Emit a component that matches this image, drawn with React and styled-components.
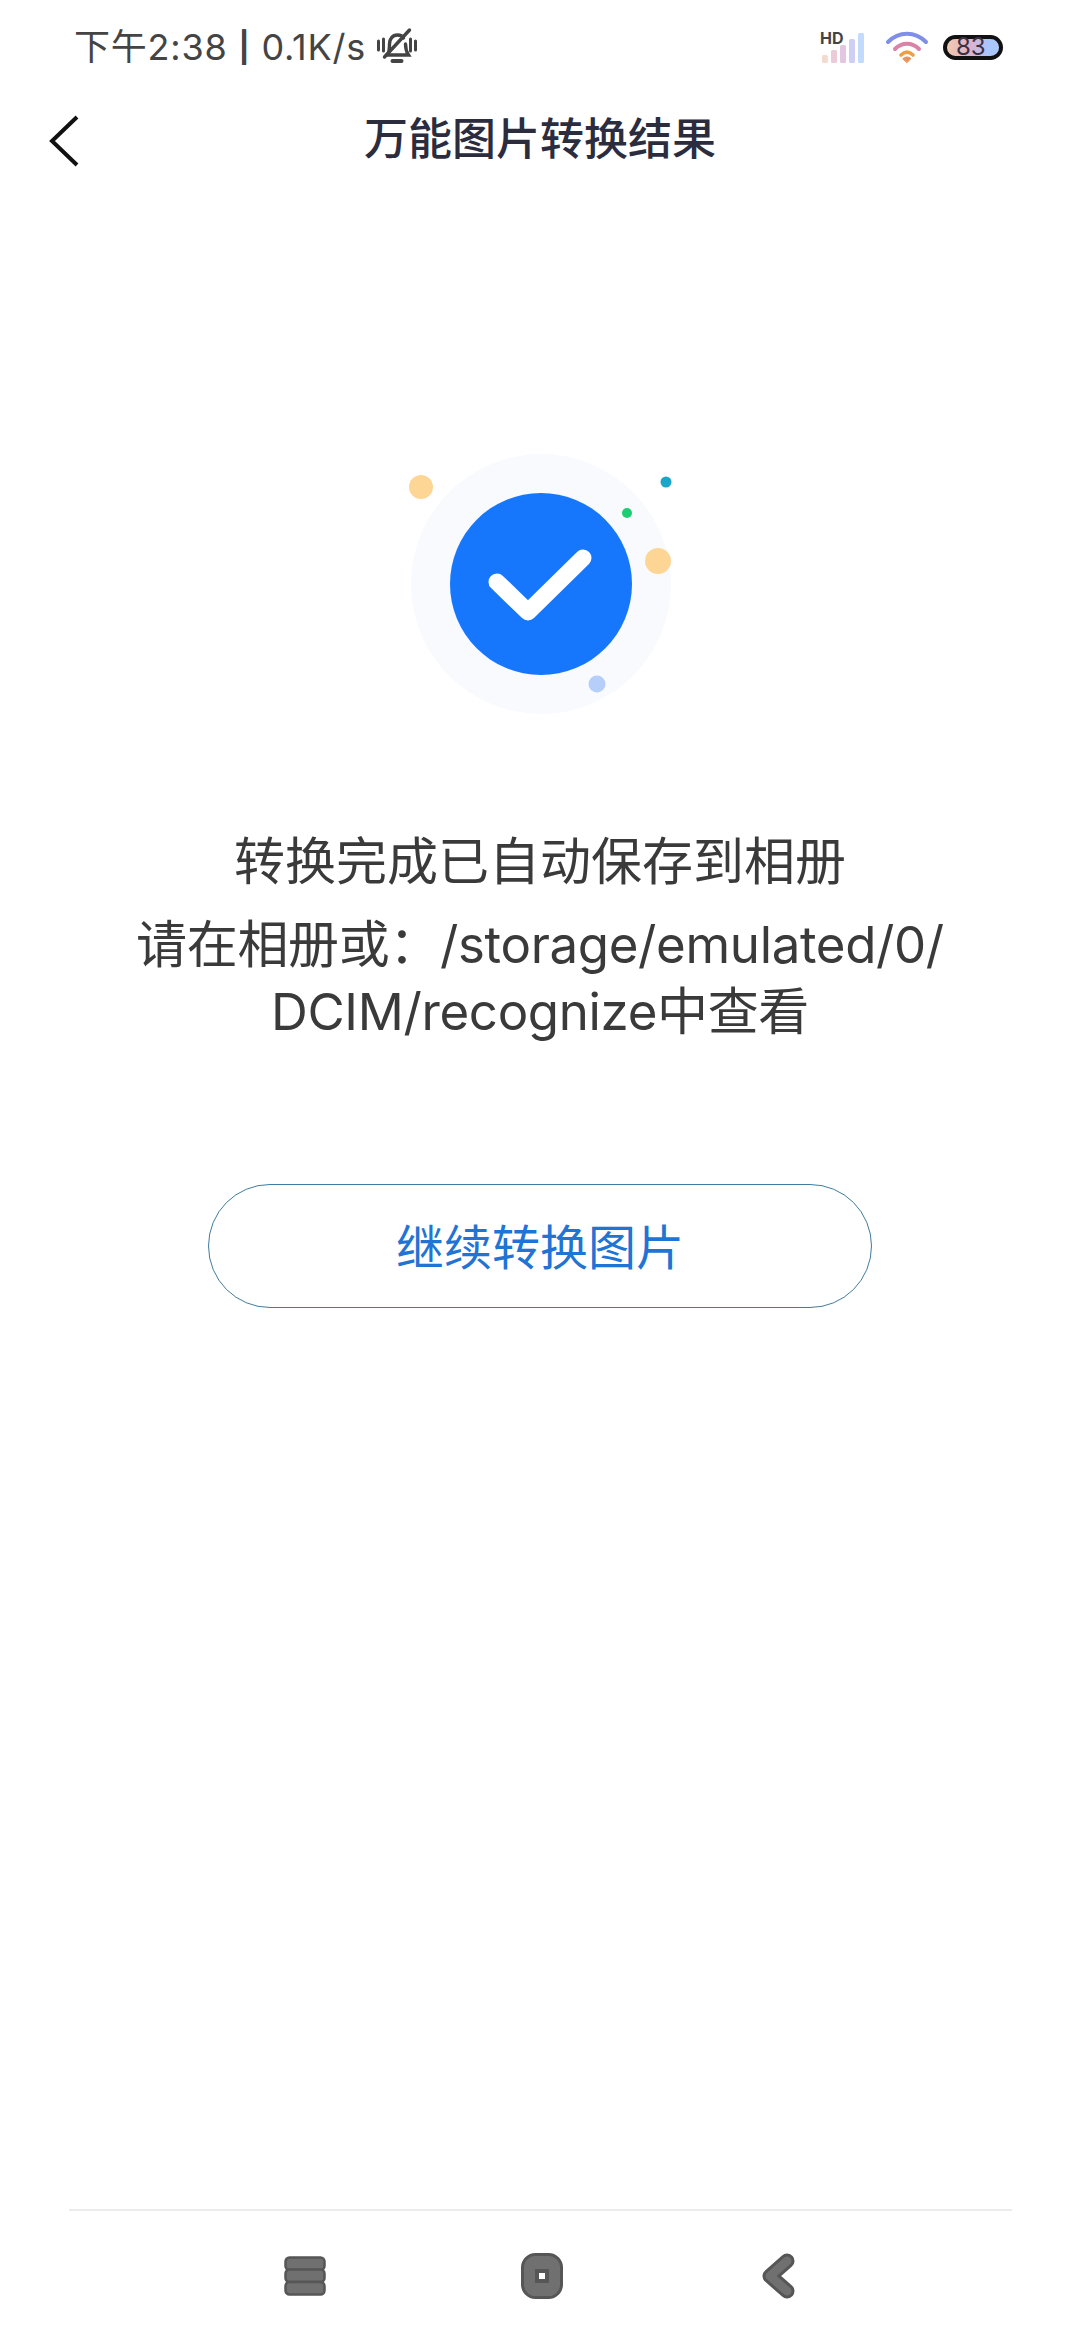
import React from 'react';
import styled, { createGlobalStyle } from 'styled-components';

const GlobalStyle = createGlobalStyle`
    html, body {
        margin: 0;
        padding: 0;
        background: #ffffff;
    }

    body {
        font-family: Inter, "Noto Sans CJK SC", sans-serif;
    }
`;

const Page = styled.div`
    width: 1080px;
    height: 2340px;
    display: flex;
    flex-direction: column;
    background: #ffffff;
    overflow: hidden;
`;

const StatusBar = styled.div`
    height: 94px;
    display: flex;
    align-items: center;
    justify-content: space-between;
    padding: 0 77px 0 74px;
    box-sizing: border-box;
`;

const StatusGroup = styled.div`
    display: flex;
    align-items: center;
    gap: ${(props) => props.$gap}px;
`;

const StatusText = styled.span`
    font-size: 36px;
    line-height: 44px;
    padding-bottom: 1px;
    color: #444444;
    letter-spacing: 0.8px;
    white-space: nowrap;
`;

const StatusPipe = styled.span`
    font-size: 30px;
    font-weight: 700;
    vertical-align: 2px;
`;

const Battery = styled.div`
    width: 60px;
    height: 25px;
    margin-left: -7px;
    box-sizing: border-box;
    border: 4px solid #111111;
    border-radius: 13px;
    background: linear-gradient(90deg, #f2c9ae 0%, #dcb2cf 45%, #a9c6ff 80%, #a9c6ff 100%);
    background-clip: padding-box;
    display: flex;
    align-items: center;
    padding-left: 9px;
    font-size: 24px;
    line-height: 1;
    font-weight: 400;
    color: #3a3040;
`;

const Header = styled.div`
    height: 88px;
    display: grid;
    grid-template-columns: 1fr auto 1fr;
    align-items: center;
    padding-left: 48px;
    padding-right: 48px;
`;

const BackButton = styled.button`
    width: 34px;
    height: 52px;
    margin-top: 6px;
    padding: 0;
    border: none;
    background: transparent;
    display: flex;
`;

const Title = styled.h1`
    margin: 0 0 5px;
    font-size: 44px;
    font-weight: 500;
    line-height: 1;
    color: #2b2d3f;
    font-family: "Noto Sans CJK SC", sans-serif;
`;

const Main = styled.main`
    padding-top: 248px;
    display: flex;
    flex-direction: column;
    align-items: center;
`;

const ResultGraphic = styled.svg`
    display: block;
    width: 320px;
    height: 300px;
`;

const Message = styled.p`
    margin: ${(props) => props.$top}px 0 0;
    font-size: 51px;
    font-weight: 400;
    line-height: 67px;
    letter-spacing: ${(props) => props.$tracking || 0}px;
    text-align: center;
    color: #3a3a3a;
    white-space: nowrap;
`;

const ContinueButton = styled.button`
    margin-top: 139px;
    width: 664px;
    height: 124px;
    padding: 0 0 4px;
    box-sizing: border-box;
    border: 1.5px solid #3f7c9f;
    border-radius: 62px;
    background: #ffffff;
    font-family: "Noto Sans CJK SC", sans-serif;
    font-size: 48px;
    color: #1f74d4;
`;

const BottomNav = styled.nav`
    margin: auto 68px 0 69px;
    height: 131px;
    border-top: 2px solid #ececec;
    box-sizing: border-box;
    display: flex;
    align-items: center;
    justify-content: center;
    gap: 195px;
    padding-left: 3px;
`;

const NavSlot = styled.div`
    width: 42px;
    height: 46px;
    display: flex;
    align-items: center;
    justify-content: center;
`;

function MutedBell() {
    return (
        <svg width="44" height="40" viewBox="0 0 43 40" fill="none" stroke="#444444" strokeWidth="3.4" strokeLinecap="round">
            <path d="M12 28c2-3 2-6 2-11 0-5 3-9 8-9 3 0 5 1 6 3M30 17c0 5 1 8 3 11H11" />
            <path d="M17 34h9" strokeWidth="4" />
            <path d="M9 30 34 3" />
            <path d="M3 14v9M8 12v12M35 12v12M40 14v9" strokeWidth="3" />
        </svg>
    );
}

function SignalIcon() {
    return (
        <svg width="44" height="38" viewBox="0 0 44 38">
            <rect x="2" y="27" width="6" height="8" rx="1.5" fill="#f3dccf" />
            <rect x="11" y="22" width="6" height="13" rx="1.5" fill="#eccbd8" />
            <rect x="20" y="17" width="6" height="18" rx="1.5" fill="#e2c6e2" />
            <rect x="29" y="11" width="6" height="24" rx="1.5" fill="#cfcff5" />
            <rect x="38" y="5" width="6" height="30" rx="1.5" fill="#c2dbfc" />
            <text x="0" y="16" fontFamily="Inter, sans-serif" fontSize="16" fontWeight="700" fill="#444444">HD</text>
        </svg>
    );
}

function WifiIcon() {
    return (
        <svg width="44" height="34" viewBox="0 0 44 32" fill="none" strokeLinecap="round" strokeWidth="4">
            <path d="M3 11C14 0 30 0 41 11" stroke="#7f8fe8" />
            <path d="M10 18c7-7 17-7 24 0" stroke="#d983a8" />
            <path d="M16 24c4-4 8-4 12 0" stroke="#ee9f45" strokeWidth="3.6" />
            <path d="M18 27.5c2.5-2 5.5-2 8 0L22 31.5z" fill="#e8925a" stroke="#e8925a" strokeWidth="1" strokeLinejoin="round" />
        </svg>
    );
}

function BackChevron() {
    return (
        <svg width="34" height="52" viewBox="0 0 34 52" fill="none" stroke="#111111" strokeWidth="4">
            <path d="M29 2 4 26l25 24" />
        </svg>
    );
}

function SuccessGraphic() {
    return (
        <ResultGraphic viewBox="0 0 320 300">
            <circle cx="161" cy="154" r="130" fill="#f8fafe" />
            <circle cx="161" cy="154" r="91" fill="#1677fc" />
            <path d="M117 152 148 182 203 128" fill="none" stroke="#ffffff" strokeWidth="17" strokeLinecap="round" strokeLinejoin="round" />
            <circle cx="41" cy="57" r="12" fill="#fdd696" />
            <circle cx="286" cy="52" r="5.5" fill="#1ba5c9" />
            <circle cx="247" cy="83" r="5" fill="#1fcc72" />
            <circle cx="278" cy="131" r="13" fill="#fdd696" />
            <circle cx="217" cy="254" r="8.5" fill="#b5cffa" />
        </ResultGraphic>
    );
}

function RecentsIcon() {
    return (
        <svg width="42" height="40" viewBox="0 0 42 40" fill="#707070" stroke="#565656" strokeWidth="2.5">
            <rect x="1.5" y="1.5" width="39" height="12.5" rx="4" />
            <rect x="1.5" y="13.5" width="39" height="12.5" rx="4" />
            <rect x="1.5" y="26" width="39" height="12.5" rx="4" />
        </svg>
    );
}

function HomeIcon() {
    return (
        <svg width="42" height="46" viewBox="0 0 42 46" fill="#707070" stroke="#565656" strokeWidth="3">
            <rect x="1.5" y="1.5" width="39" height="43" rx="13" />
            <rect x="16" y="18" width="10" height="10" fill="#ffffff" strokeWidth="4" />
        </svg>
    );
}

function ReturnIcon() {
    return (
        <svg width="34" height="46" viewBox="0 0 34 46" fill="none" strokeLinecap="round" strokeLinejoin="round">
            <path d="M25 8 8 23l17 15" stroke="#565656" strokeWidth="15" />
            <path d="M25 8 8 23l17 15" stroke="#707070" strokeWidth="9" />
        </svg>
    );
}

export default function App() {
    return (
        <Page>
            <GlobalStyle />
            <StatusBar>
                <StatusGroup $gap={9}>
                    <StatusText>下午2:38 <StatusPipe>|</StatusPipe> 0.1K/s</StatusText>
                    <MutedBell />
                </StatusGroup>
                <StatusGroup $gap={21}>
                    <SignalIcon />
                    <WifiIcon />
                    <Battery>83</Battery>
                </StatusGroup>
            </StatusBar>
            <Header>
                <BackButton><BackChevron /></BackButton>
                <Title>万能图片转换结果</Title>
            </Header>
            <Main>
                <SuccessGraphic />
                <Message $top={98}>转换完成已自动保存到相册</Message>
                <Message $top={16} $tracking={-0.35}>请在相册或：/storage/emulated/0/<br />DCIM/recognize中查看</Message>
                <ContinueButton>继续转换图片</ContinueButton>
            </Main>
            <BottomNav>
                <NavSlot><RecentsIcon /></NavSlot>
                <NavSlot><HomeIcon /></NavSlot>
                <NavSlot><ReturnIcon /></NavSlot>
            </BottomNav>
        </Page>
    );
}
